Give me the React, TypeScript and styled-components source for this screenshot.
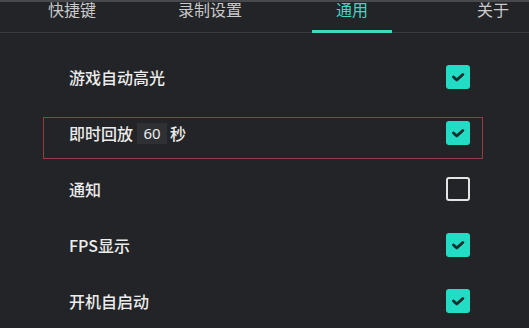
import React, { FC, useState } from 'react';
import styled, { createGlobalStyle } from 'styled-components';

const GlobalStyle = createGlobalStyle`
  html, body {
    margin: 0;
    padding: 0;
    background-color: #232427;
  }
  body {
    font-family: "Noto Sans CJK SC", "Noto Sans", sans-serif;
  }
`;

const Page = styled.div`
  width: 529px;
  height: 328px;
  overflow: hidden;
  background-color: #232427;
  border-top: 2px solid #48494d;
  box-sizing: border-box;
`;

const TabBar = styled.div`
  display: grid;
  grid-template-columns: 130px 158px 141px auto;
  align-items: end;
  height: 33px;
  padding-left: 24px;
  border-bottom: 1px solid #3a3b3f;
  box-sizing: border-box;
  margin-top: -2px;
`;

const Tab = styled.div<{ $active?: boolean }>`
  justify-self: start;
  padding: 0 24px 12px;
  margin-bottom: -1px;
  font-size: 16px;
  line-height: 18px;
  white-space: nowrap;
  color: ${p => (p.$active ? '#3fd6c2' : '#c9c9c9')};
  border-bottom: 3px solid ${p => (p.$active ? '#3fd6c2' : 'transparent')};
`;

const List = styled.div`
  display: flex;
  flex-direction: column;
  padding-top: 16px;
`;

const Row = styled.div<{ $marked?: boolean }>`
  position: relative;
  display: flex;
  align-items: center;
  justify-content: space-between;
  height: 56px;
  padding: 0 59px 0 69px;
  ${p =>
    p.$marked &&
    `
    &::after {
      content: '';
      position: absolute;
      left: 43px;
      right: 46px;
      top: 12px;
      bottom: 2px;
      border: 1px solid #9a3a3e;
      pointer-events: none;
    }
  `}
`;

const Label = styled.div`
  display: flex;
  align-items: center;
  font-size: 16px;
  font-weight: 500;
  color: #ececec;
  line-height: 20px;
`;

const SecondsInput = styled.input`
  width: 30px;
  height: 21px;
  margin: 0 3px 0 4px;
  padding: 0;
  border: none;
  outline: none;
  background-color: #2f3034;
  color: #ececec;
  font-family: "Noto Sans", sans-serif;
  font-size: 15px;
  text-align: center;
`;

const Box = styled.button<{ $checked: boolean }>`
  display: flex;
  align-items: center;
  justify-content: center;
  width: 24px;
  height: 24px;
  padding: 0;
  border-radius: 3px;
  box-sizing: border-box;
  cursor: pointer;
  background-color: ${p => (p.$checked ? '#23dcc6' : 'transparent')};
  border: ${p => (p.$checked ? 'none' : '2px solid #e4e4e4')};
`;

const Check: FC<{ checked: boolean; onToggle: () => void }> = ({ checked, onToggle }) => (
  <Box $checked={checked} onClick={onToggle}>
    {checked && (
      <svg width="24" height="24" viewBox="0 0 24 24">
        <polyline
          points="7.5,12 10.8,15 16.8,9.5"
          fill="none"
          stroke="#16302e"
          strokeWidth="3"
          strokeLinecap="round"
          strokeLinejoin="round"
        />
      </svg>
    )}
  </Box>
);

const tabs = ['快捷键', '录制设置', '通用', '关于'];

const App: FC = () => {
  const [seconds, setSeconds] = useState('60');
  const [flags, setFlags] = useState({
    highlight: true,
    replay: true,
    notify: false,
    fps: true,
    autostart: true,
  });

  const toggle = (key: keyof typeof flags) => setFlags(f => ({ ...f, [key]: !f[key] }));

  return (
    <Page>
      <GlobalStyle />
      <TabBar>
        {tabs.map(t => (
          <Tab key={t} $active={t === '通用'}>
            {t}
          </Tab>
        ))}
      </TabBar>
      <List>
        <Row>
          <Label>游戏自动高光</Label>
          <Check checked={flags.highlight} onToggle={() => toggle('highlight')} />
        </Row>
        <Row $marked>
          <Label>
            即时回放
            <SecondsInput value={seconds} onChange={e => setSeconds(e.target.value)} />
            秒
          </Label>
          <Check checked={flags.replay} onToggle={() => toggle('replay')} />
        </Row>
        <Row>
          <Label>通知</Label>
          <Check checked={flags.notify} onToggle={() => toggle('notify')} />
        </Row>
        <Row>
          <Label>FPS显示</Label>
          <Check checked={flags.fps} onToggle={() => toggle('fps')} />
        </Row>
        <Row>
          <Label>开机自启动</Label>
          <Check checked={flags.autostart} onToggle={() => toggle('autostart')} />
        </Row>
      </List>
    </Page>
  );
};

export default App;
